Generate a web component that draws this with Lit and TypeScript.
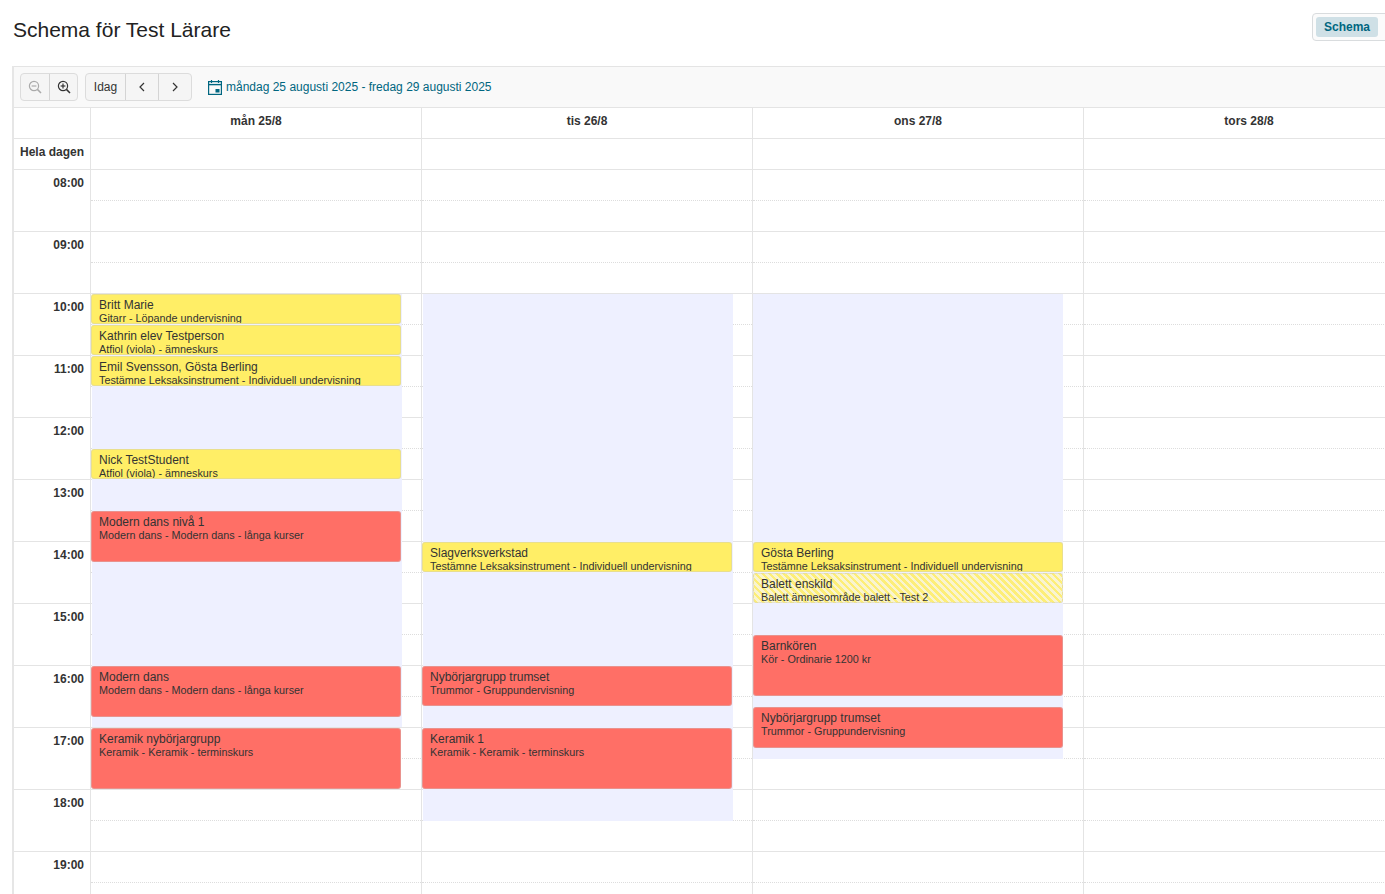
import { LitElement, html, css, svg } from "lit";
import { customElement } from "lit/decorators.js";

type Ev = { top: number; h: number; t: string; s: string; kind: "y" | "r" | "st" };
type Day = { head: string; bg?: [number, number]; bgLeft?: number; evs: Ev[] };

const GRID_TOP = 170;
const e = (a: number, b: number, kind: Ev["kind"], t: string, s: string): Ev => ({ top: a - GRID_TOP, h: b - a, t, s, kind });

const days: Day[] = [
  {
    head: "mån 25/8",
    bg: [294, 727],
    bgLeft: 1,
    evs: [
      e(294, 324, "y", "Britt Marie", "Gitarr - Löpande undervisning"),
      e(325, 355, "y", "Kathrin elev Testperson", "Atfiol (viola) - ämneskurs"),
      e(356, 386, "y", "Emil Svensson, Gösta Berling", "Testämne Leksaksinstrument - Individuell undervisning"),
      e(449, 479, "y", "Nick TestStudent", "Atfiol (viola) - ämneskurs"),
      e(511, 562, "r", "Modern dans nivå 1", "Modern dans - Modern dans - långa kurser"),
      e(666, 717, "r", "Modern dans", "Modern dans - Modern dans - långa kurser"),
      e(728, 789, "r", "Keramik nybörjargrupp", "Keramik - Keramik - terminskurs"),
    ],
  },
  {
    head: "tis 26/8",
    bg: [294, 821],
    bgLeft: 1,
    evs: [
      e(542, 572, "y", "Slagverksverkstad", "Testämne Leksaksinstrument - Individuell undervisning"),
      e(666, 706, "r", "Nybörjargrupp trumset", "Trummor - Gruppundervisning"),
      e(728, 789, "r", "Keramik 1", "Keramik - Keramik - terminskurs"),
    ],
  },
  {
    head: "ons 27/8",
    bg: [294, 759],
    bgLeft: 0,
    evs: [
      e(542, 572, "y", "Gösta Berling", "Testämne Leksaksinstrument - Individuell undervisning"),
      e(573, 603, "st", "Balett enskild", "Balett ämnesområde balett - Test 2"),
      e(635, 696, "r", "Barnkören", "Kör - Ordinarie 1200 kr"),
      e(707, 748, "r", "Nybörjargrupp trumset", "Trummor - Gruppundervisning"),
    ],
  },
  { head: "tors 28/8", evs: [] },
];

const hours = ["08:00", "09:00", "10:00", "11:00", "12:00", "13:00", "14:00", "15:00", "16:00", "17:00", "18:00", "19:00"];

const zoomIcon = (plus: boolean) => svg`<svg width="14" height="14" viewBox="0 0 14 14" fill="none" stroke="currentColor" stroke-width="1.2">
  <circle cx="6" cy="6" r="4.6"></circle><path d="M9.4 9.4 13 13" stroke-width="1.5"></path>
  <path d="M3.6 6h4.8"></path>${plus ? svg`<path d="M6 3.6v4.8"></path>` : ""}</svg>`;

@customElement("app-root")
export class AppRoot extends LitElement {
  static styles = css`
    :host { display: block; height: 894px; overflow: hidden; background: #fff; font-family: "Liberation Sans", Arial, sans-serif; color: #333; font-size: 12px; }
    .top { display: flex; justify-content: space-between; align-items: flex-start; height: 66px; padding: 13px 0 0 13px; box-sizing: border-box; }
    h1 { margin: 0; font-size: 21px; font-weight: 400; line-height: 34px; color: #222; }
    .viewsw { margin-right: -10px; width: 83px; height: 28px; box-sizing: border-box; border: 1px solid #d9dcde; border-radius: 4px; padding: 3px; background: #fbfbfb; }
    .viewsw span { display: block; width: 62px; height: 20px; line-height: 20px; text-align: center; background: #cfe0e6; border-radius: 3px; color: #006680; font-weight: 700; }
    .cal { margin-left: 12px; border-left: 2px solid #e6e6e6; width: 1500px; }
    .toolbar { height: 42px; box-sizing: border-box; background: #f9f9f9; border-top: 1px solid #e4e4e4; border-bottom: 1px solid #e4e4e4; padding: 6px 0 0 6px; display: flex; align-items: flex-start; }
    .group { display: flex; height: 28px; border: 1px solid #dcdcdc; border-radius: 4px; background: #f5f5f5; box-sizing: border-box; margin-right: 7px; }
    .group button { all: unset; box-sizing: border-box; height: 26px; display: flex; align-items: center; justify-content: center; font-size: 12px; color: #333; border-left: 1px solid #d4d4d4; }
    .group button:first-child { border-left: 0; }
    .group .b-zoom { width: 28px; }
    .group .b-zoom.off { color: #aaa; }
    .group .b-today { width: 39px; }
    .group .b-nav { width: 33px; }
    .date { display: flex; align-items: center; gap: 4px; height: 28px; margin-left: 9px; color: #006680; font-size: 12px; }
    .date svg { display: block; }
    .row { display: flex; box-sizing: border-box; height: 31px; border-bottom: 1px solid #e4e4e4; }
    .tc { width: 77px; flex: none; box-sizing: border-box; border-right: 1px solid #e4e4e4; text-align: right; padding-right: 6px; font-weight: 700; color: #333; line-height: 26px; }
    .dc { width: 331px; flex: none; box-sizing: border-box; border-right: 1px solid #e4e4e4; text-align: center; font-weight: 700; line-height: 27px; }
    .body { position: relative; }
    .hour { display: flex; height: 62px; box-sizing: border-box; border-bottom: 1px solid #e4e4e4; }
    .hour .dc { position: relative; }
    .hour .dc::before { content: ""; position: absolute; left: 0; right: 0; top: 30px; border-top: 1px dotted #dddddd; }
    .overlay { position: absolute; top: 0; left: 0; width: 0; }
    .col { position: absolute; top: 0; width: 330px; }
    .avail { position: absolute; width: 310px; background: #eef0ff; }
    .ev { position: absolute; left: 0; width: 310px; box-sizing: border-box; border: 1px solid rgba(200, 200, 200, 0.4); border-radius: 3px; overflow: hidden; padding: 2px 7px 0; color: #333; }
    .ev.y { background-color: #ffee66; }
    .ev.r { background-color: #ff6f66; }
    .ev.st { background-color: #fbf3a8; background-image: repeating-linear-gradient(45deg, #fdee78 0 2.5px, #f9f4d0 2.5px 5px); }
    .ev .t { font-size: 12px; line-height: 16px; white-space: nowrap; }
    .ev .s { font-size: 10.8px; line-height: 11px; white-space: nowrap; }
  `;

  render() {
    return html`
      <div class="top">
        <h1>Schema för Test Lärare</h1>
        <div class="viewsw"><span>Schema</span></div>
      </div>
      <div class="cal">
        <div class="toolbar">
          <div class="group">
            <button class="b-zoom off">${zoomIcon(false)}</button>
            <button class="b-zoom">${zoomIcon(true)}</button>
          </div>
          <div class="group">
            <button class="b-today">Idag</button>
            <button class="b-nav"><svg width="8" height="10" viewBox="0 0 8 10" fill="none" stroke="#333" stroke-width="1.2"><path d="M6 1 2 5l4 4"></path></svg></button>
            <button class="b-nav"><svg width="8" height="10" viewBox="0 0 8 10" fill="none" stroke="#333" stroke-width="1.2"><path d="M2 1l4 4-4 4"></path></svg></button>
          </div>
          <div class="date">
            <svg width="14" height="15" viewBox="0 0 14 15" fill="none" stroke="#006680" stroke-width="1.2"><rect x=".6" y="1.6" width="12.8" height="12.8"></rect><path d="M.6 4.6h12.8" stroke-width="1.4"></path><path d="M3.5 0v3M10.5 0v3"></path><rect x="7.5" y="9" width="4" height="3.5" fill="#006680" stroke="none"></rect></svg>
            <span>måndag 25 augusti 2025 - fredag 29 augusti 2025</span>
          </div>
        </div>
        <div class="row">
          <div class="tc"></div>
          ${days.map((d) => html`<div class="dc">${d.head}</div>`)}
          <div class="dc"></div>
        </div>
        <div class="row">
          <div class="tc">Hela dagen</div>
          ${days.map(() => html`<div class="dc"></div>`)}
          <div class="dc"></div>
        </div>
        <div class="body">
          ${hours.map(
            (h) => html`<div class="hour"><div class="tc">${h}</div>${days.map(() => html`<div class="dc"></div>`)}<div class="dc"></div></div>`
          )}
          <div class="overlay">
            ${days.map(
              (d, i) => html`<div class="col" style="left:${77 + i * 331}px">
                ${d.bg ? html`<div class="avail" style="left:${d.bgLeft}px;top:${d.bg[0] - GRID_TOP}px;height:${d.bg[1] - d.bg[0]}px"></div>` : ""}
                ${d.evs.map(
                  (ev) => html`<div class="ev ${ev.kind}" style="top:${ev.top}px;height:${ev.h}px">
                    <div class="t">${ev.t}</div><div class="s">${ev.s}</div>
                  </div>`
                )}
              </div>`
            )}
          </div>
        </div>
      </div>
    `;
  }
}
